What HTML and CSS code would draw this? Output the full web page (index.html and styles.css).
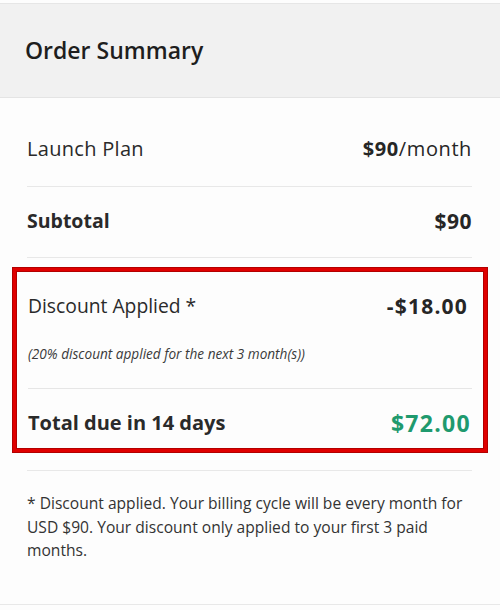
FILE: index.html
```html
<!DOCTYPE html>
<html lang="en">
<head>
<meta charset="utf-8">
<link rel="stylesheet" href="styles.css">
</head>
<body>
<div class="card">
  <div class="header"><h1 class="title">Order Summary</h1></div>
  <div class="content">
    <div class="row row-plan">
      <span class="label">Launch Plan</span>
      <span class="value"><b>$90</b>/month</span>
    </div>
    <div class="row row-sub">
      <span class="label strong">Subtotal</span>
      <span class="value strong sub-amt">$90</span>
    </div>
  </div>
  <div class="highlight">
    <div class="disc-block">
      <div class="row-disc">
        <span class="label">Discount Applied *</span>
        <span class="value strong disc-amt">-$18.00</span>
      </div>
      <div class="note">(20% discount applied for the next 3 month(s))</div>
    </div>
    <div class="row-total">
      <span class="label strong">Total due in 14 days</span>
      <span class="value total-amt">$72.00</span>
    </div>
  </div>
  <div class="content">
    <div class="foot">* Discount applied. Your billing cycle will be every month for USD $90. Your discount only applied to your first 3 paid months.</div>
  </div>
</div>
</body>
</html>
```
FILE: styles.css
```css
html, body { margin: 0; padding: 0; background: #fdfdfd; }
body { font-family: "Open Sans", "Noto Sans", sans-serif; color: #262626; }
.card {
  margin-top: 3px;
  border-top: 1px solid #e6e6e6;
  border-bottom: 1px solid #e8e8e8;
  height: 602px;
  box-sizing: border-box;
  background: #fdfdfd;
}
.header {
  background: #f1f1f1;
  height: 94px;
  border-bottom: 1px solid #e4e4e4;
  box-sizing: border-box;
  display: flex;
  align-items: center;
  padding: 0 25px;
}
.title { margin: 0; font-size: 23px; font-weight: 600; color: #1e1e1e; padding-bottom: 2px; }
.content { padding: 0 28px 0 27px; }
.row {
  display: flex;
  justify-content: space-between;
  align-items: center;
  border-bottom: 1px solid #e8e8e8;
  line-height: 26px;
}
.row-plan { padding: 38px 0 24px; font-size: 20px; letter-spacing: 0.3px; }
.row-plan .value { letter-spacing: 0.6px; }
.row-sub { padding: 21px 0 23px; font-size: 19.5px; }
.sub-amt { font-size: 21px; letter-spacing: 0.5px; }
.label { color: #2a2a2a; }
.value b { font-weight: 700; }
.strong { font-weight: 700; }
.highlight {
  margin: 10px 13px 0;
  border: 3px solid #e00000;
  box-shadow: 0 0 0 1px #b30000, inset 0 0 0 1px #b30000;
  padding: 0 12px;
  background: #fdfdfd;
}
.disc-block { border-bottom: 1px solid #e6e6e6; padding: 22px 0 25px; }
.row-disc {
  display: flex; justify-content: space-between; align-items: center;
  font-size: 19.3px; line-height: 26px; padding-right: 5px;
}
.disc-amt { font-size: 21px; letter-spacing: 1.2px; margin-right: -1px; }
.note { margin-top: 26px; font-size: 13.6px; font-style: italic; line-height: 18px; color: #3a3a3a; }
.row-total {
  display: flex; justify-content: space-between; align-items: center;
  padding: 20px 2px 12px 0; line-height: 28px; font-size: 20px;
}
.total-amt { color: #1f9a6e; font-weight: 700; font-size: 23px; letter-spacing: 1.3px; margin-right: -1px; }
.foot {
  border-top: 1px solid #e8e8e8;
  margin-top: 18px;
  padding-top: 21px;
  font-size: 15.6px;
  line-height: 23.5px;
  color: #333;
}
```
